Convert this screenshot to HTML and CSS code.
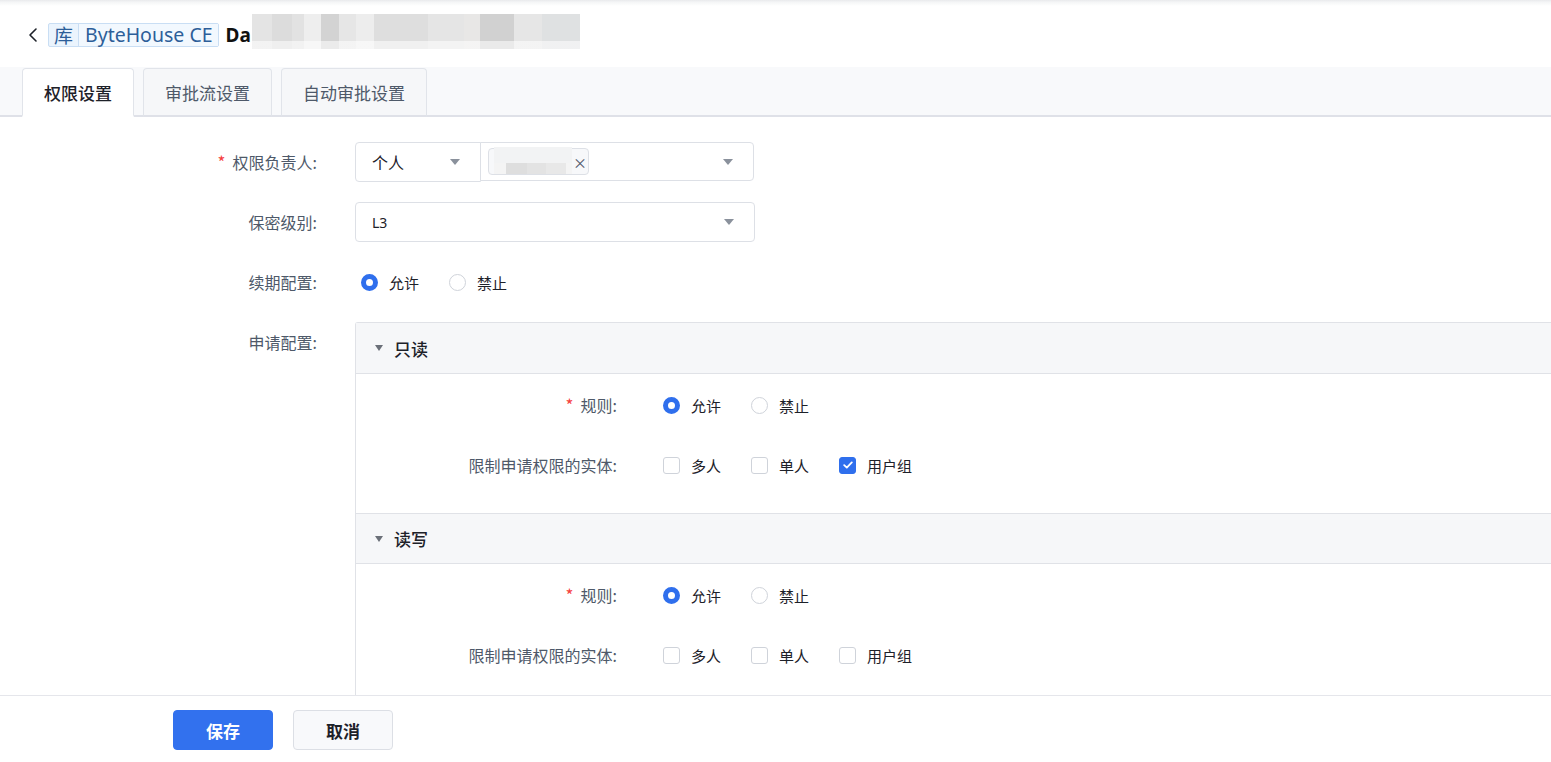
FILE: index.html
```html
<!DOCTYPE html>
<html lang="zh-CN">
<head>
<meta charset="utf-8">
<title>权限设置</title>
<link rel="stylesheet" href="styles.css">
</head>
<body>
<div class="page">
  <div class="topline"></div>
  <header class="header">
    <span class="back">
      <svg width="10" height="16" viewBox="0 0 10 16"><path d="M8 2 L2 8 L8 14" fill="none" stroke="#1d2129" stroke-width="1.6" stroke-linecap="round" stroke-linejoin="round"/></svg>
    </span>
    <span class="dbtag"><span class="dbtag-kind">库</span><span class="dbtag-name">ByteHouse CE</span></span>
    <span class="title">Da</span>
    <span class="redact"></span>
  </header>

  <nav class="tabs">
    <div class="tab active">权限设置</div>
    <div class="tab">审批流设置</div>
    <div class="tab">自动审批设置</div>
  </nav>

  <main class="content">
    <div class="form">
      <div class="label"><span class="req">*</span>权限负责人:</div>
      <div class="control">
        <div class="owner">
          <div class="select select-type"><span class="val16">个人</span><span class="arrow"></span></div>
          <div class="select select-user">
            <span class="chip"><span class="chip-redact"></span><span class="chip-x">×</span></span>
            <span class="arrow"></span>
          </div>
        </div>
      </div>

      <div class="label">保密级别:</div>
      <div class="control">
        <div class="select select-wide"><span class="val14">L3</span><span class="arrow"></span></div>
      </div>

      <div class="label">续期配置:</div>
      <div class="control">
        <div class="options">
          <label class="opt"><span class="radio on"></span>允许</label>
          <label class="opt"><span class="radio"></span>禁止</label>
        </div>
      </div>

      <div class="label">申请配置:</div>
      <div class="control-panel">
        <div class="panel">
          <div class="panel-head"><span class="caret"></span>只读</div>
          <div class="panel-body">
            <div class="plabel"><span class="req">*</span>规则:</div>
            <div class="options">
              <label class="opt"><span class="radio on"></span>允许</label>
              <label class="opt"><span class="radio"></span>禁止</label>
            </div>
            <div class="plabel">限制申请权限的实体:</div>
            <div class="options">
              <label class="opt"><span class="check"></span>多人</label>
              <label class="opt"><span class="check"></span>单人</label>
              <label class="opt"><span class="check on"><svg width="10" height="8" viewBox="0 0 10 8"><path d="M1.2 4.2 L3.8 6.6 L8.8 1.4" fill="none" stroke="#fff" stroke-width="1.8" stroke-linecap="round" stroke-linejoin="round"/></svg></span>用户组</label>
            </div>
          </div>
          <div class="panel-head"><span class="caret"></span>读写</div>
          <div class="panel-body">
            <div class="plabel"><span class="req">*</span>规则:</div>
            <div class="options">
              <label class="opt"><span class="radio on"></span>允许</label>
              <label class="opt"><span class="radio"></span>禁止</label>
            </div>
            <div class="plabel">限制申请权限的实体:</div>
            <div class="options">
              <label class="opt"><span class="check"></span>多人</label>
              <label class="opt"><span class="check"></span>单人</label>
              <label class="opt"><span class="check"></span>用户组</label>
            </div>
          </div>
        </div>
      </div>
    </div>
  </main>

  <footer class="footer">
    <button class="btn primary">保存</button>
    <button class="btn ghost">取消</button>
  </footer>
</div>
</body>
</html>
```

FILE: styles.css
```css
* { box-sizing: border-box; }
html, body { margin: 0; padding: 0; }
body {
  font-family: "Noto Sans", "Noto Sans CJK SC", sans-serif;
  color: #1d2129;
  background: #fff;
  overflow: hidden;
}
.page {
  width: 1551px;
  height: 762px;
  display: flex;
  flex-direction: column;
  overflow: hidden;
}
.topline {
  height: 6px;
  flex: none;
  background: linear-gradient(to bottom, #e9eaec 0, #f4f5f6 2px, #ffffff 6px);
}
.header {
  height: 61px;
  flex: none;
  display: flex;
  align-items: center;
  padding-left: 28px;
  padding-bottom: 4px;
}
.back { display: flex; width: 10px; height: 16px; margin-right: 10px; }
.dbtag {
  display: inline-flex;
  align-items: stretch;
  height: 24px;
  border: 1px solid #c9def4;
  background: #ebf4fd;
  border-radius: 2px;
  color: #2d5e99;
  font-size: 19.5px;
  line-height: 22px;
}
.dbtag-kind {
  padding: 0 5px 0 5px;
  border-right: 1px solid #c9def4;
  font-family: "Noto Sans CJK SC", sans-serif;
  font-size: 19px;
}
.dbtag-name { padding: 0 5px 0 6px; background: #f2f8fe; }
.title {
  font-size: 19px;
  font-weight: 700;
  margin-left: 7px;
  color: #111;
  white-space: nowrap;
}
.redact {
  width: 328px;
  height: 35px;
  margin-top: -6px;
  margin-left: 1px;
  background:
    linear-gradient(to bottom, transparent 0, transparent 27px, rgba(255,255,255,0.55) 27px),
    linear-gradient(to right,
      #e4e4e4 0, #e4e4e4 20px, #dcdcdc 20px, #dcdcdc 40px, #e2e2e2 40px, #e2e2e2 52px,
      #eeeeee 52px, #eeeeee 69px, #d3d3d3 69px, #d3d3d3 87px, #e6e6e6 87px, #e6e6e6 104px,
      #ededed 104px, #ededed 122px, #dedede 122px, #dedede 176px, #e5e5e5 176px, #e5e5e5 212px,
      #e8e7e6 212px, #e8e7e6 228px, #d1d1d1 228px, #d1d1d1 262px, #e6e6e6 262px, #e6e6e6 290px,
      #dfe1e2 290px, #dfe1e2 328px);
}
.tabs {
  height: 50px;
  flex: none;
  display: flex;
  align-items: flex-end;
  gap: 9px;
  padding-left: 22px;
  background: #f8f9fb;
  border-bottom: 2px solid #dfe1e8;
}
.tab {
  height: 49px;
  margin-bottom: -2px;
  padding: 0 21px;
  border: 1px solid #e1e4ea;
  border-radius: 4px 4px 0 0;
  background: #f6f7f9;
  font-family: "Noto Sans CJK SC", sans-serif;
  font-size: 17px;
  line-height: 48px;
  color: #4e5969;
  border-bottom: 2px solid #dfe1e8;
}
.tab.active {
  background: #fff;
  color: #1d2129;
  font-weight: 500;
  border-bottom: 2px solid #fff;
}
.content {
  flex: 1;
  overflow: hidden;
  padding-top: 25px;
}
.form {
  display: grid;
  grid-template-columns: 317px 1fr;
  column-gap: 38px;
  row-gap: 20px;
  font-family: "Noto Sans CJK SC", sans-serif;
}
.label {
  height: 40px;
  line-height: 40px;
  text-align: right;
  font-size: 16px;
  color: #4e5969;
}
.req {
  color: #f53f3f;
  margin-right: 7px;
  font-size: 17px;
}
.control { height: 40px; display: flex; align-items: center; }
.owner { display: flex; height: 40px; }
.select {
  position: relative;
  display: flex;
  align-items: center;
  height: 39px;
  border: 1px solid #dde0e6;
  border-radius: 4px;
  background: #fff;
}
.select-type { width: 126px; padding-left: 16px; border-radius: 4px 0 0 4px; height: 40px; }
.select-user { width: 274px; margin-left: -1px; padding-left: 7px; border-radius: 0 4px 4px 0; }
.select-wide { width: 400px; padding-left: 16px; height: 40px; }
.val16 { font-size: 16px; color: #1d2129; }
.val14 { font-size: 14px; color: #1d2129; font-family: "Noto Sans", sans-serif; }
.arrow {
  position: absolute;
  right: 20px;
  top: 50%;
  margin-top: -3px;
  width: 0; height: 0;
  border-left: 5px solid transparent;
  border-right: 5px solid transparent;
  border-top: 6px solid #8a919c;
}
.chip {
  display: inline-flex;
  align-items: center;
  width: 101px;
  height: 27px;
  border: 1px solid #dde0e6;
  border-radius: 4px;
  background: #f7f8fa;
  padding-left: 5px;
}
.chip-redact {
  width: 78px;
  height: 27px;
  margin-top: -3px;
  background:
    linear-gradient(to bottom, #f2f3f4 0, #f2f3f4 16px, transparent 16px),
    linear-gradient(to right, #f4f4f4 0, #f4f4f4 12px, #dedede 12px, #dedede 33px, #e3e3e3 33px, #e3e3e3 52px, #e8e8e8 52px, #e8e8e8 72px, #f4f4f4 72px);
}
.chip-x { margin-left: 1px; font-size: 14px; color: #4e5969; line-height: 1; }
.options { display: flex; align-items: center; height: 40px; padding-left: 6px; gap: 30px; }
.opt {
  display: inline-flex;
  align-items: center;
  font-size: 15px;
  color: #1d2129;
  gap: 11px;
}
.radio {
  width: 17px; height: 17px;
  border-radius: 50%;
  border: 1px solid #cfd3da;
  background: #fff;
  flex: none;
}
.radio.on {
  border: 5px solid #2f6fed;
  background: #fff;
}
.check {
  width: 17px; height: 17px;
  border-radius: 3px;
  border: 1px solid #cfd3da;
  background: #fff;
  display: inline-flex;
  align-items: center;
  justify-content: center;
  flex: none;
}
.check.on { background: #2f6fed; border-color: #2f6fed; }
.control-panel { min-width: 0; }
.panel {
  border: 1px solid #e0e2e7;
  border-right: none;
  border-bottom: none;
  border-radius: 3px 0 0 0;
}
.panel-head {
  height: 51px;
  display: flex;
  align-items: center;
  padding-left: 19px;
  background: #f6f7f9;
  border-bottom: 1px solid #e0e2e7;
  font-size: 17px;
  font-weight: 500;
  color: #1d2129;
}
.panel-body + .panel-head { border-top: 1px solid #e0e2e7; }
.caret {
  width: 0; height: 0;
  border-left: 4.5px solid transparent;
  border-right: 4.5px solid transparent;
  border-top: 6px solid #6b7079;
  margin-right: 11px;
}
.panel-body {
  display: grid;
  grid-template-columns: 261px 1fr;
  column-gap: 40px;
  row-gap: 20px;
  padding: 11px 0 28px;
}
.plabel {
  height: 40px;
  line-height: 40px;
  text-align: right;
  font-size: 16px;
  color: #4e5969;
}
.footer {
  height: 67px;
  flex: none;
  border-top: 1px solid #e5e6eb;
  display: flex;
  align-items: flex-start;
  gap: 20px;
  padding: 14px 0 0 173px;
  background: #fff;
}
.btn {
  width: 100px;
  height: 40px;
  border-radius: 4px;
  font-family: "Noto Sans CJK SC", sans-serif;
  font-size: 17px;
  font-weight: 700;
  cursor: pointer;
}
.btn.primary { background: #3271ee; border: 1px solid #3271ee; color: #fff; }
.btn.ghost { background: #f8f9fb; border: 1px solid #dcdfe5; color: #1d2129; }
```
